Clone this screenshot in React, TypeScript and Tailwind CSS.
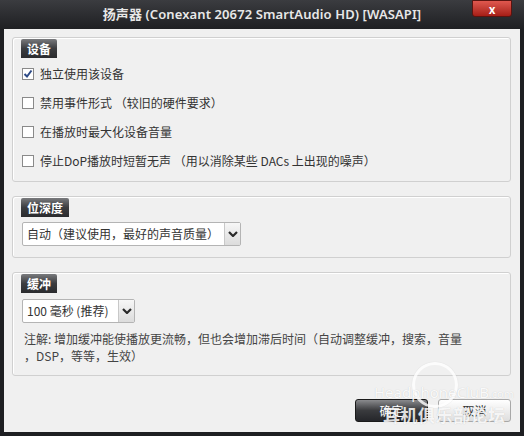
const font = { fontFamily: '"Noto Sans CJK SC", "Noto Sans", sans-serif' };

const devices = [
  { label: "独立使用该设备", checked: true },
  { label: "禁用事件形式 （较旧的硬件要求）", checked: false },
  { label: "在播放时最大化设备音量", checked: false },
  { label: "停止DoP播放时短暂无声 （用以消除某些 DACs 上出现的噪声）", checked: false },
];

const Tab = ({ text }: { text: string }) => (
  <div className="ml-[8px] mt-[1px] self-start h-[19px] px-[6px] flex items-center rounded-t-[2px] bg-gradient-to-b from-[#7a7b7e] via-[#3c3d40] to-[#2a2b2e] text-white text-[12px] font-bold leading-none">
    {text}
  </div>
);

const Chevron = () => (
  <svg width="10" height="6" viewBox="0 0 10 6">
    <path d="M1 1 L5 5 L9 1" fill="none" stroke="#2a2a2a" strokeWidth="2.2" />
  </svg>
);

const Select = ({ text, width }: { text: string; width: string }) => (
  <div className={`${width} ml-[9px] h-[24px] flex border border-[#b4b4b4] bg-white rounded-[2px]`}>
    <div className="flex-1 flex items-center pl-[4px] text-[12px] text-[#333]">{text}</div>
    <div className="w-[16px] flex items-center justify-center border-l border-[#c8c8c8] bg-gradient-to-b from-[#f7f7f7] to-[#dcdcdc]">
      <Chevron />
    </div>
  </div>
);

const Checkbox = ({ checked }: { checked: boolean }) => (
  <div className="w-[12px] h-[12px] border border-[#8a8a8a] bg-white flex items-center justify-center">
    {checked && (
      <svg width="10" height="10" viewBox="0 0 10 10">
        <path d="M1.5 5 L4 7.5 L8.5 1.5" fill="none" stroke="#2d4a86" strokeWidth="2" />
      </svg>
    )}
  </div>
);

export default function App() {
  return (
    <div className="w-[524px] h-[436px] bg-[#1e1f22] flex flex-col overflow-hidden" style={font}>
      <div className="relative h-[29px] bg-gradient-to-b from-[#3b3c40] to-[#1f2023] flex items-center justify-center">
        <span className="text-[13px] font-semibold text-[#e8e8e8] tracking-[0.1px]" style={{ fontFamily: '"Noto Sans", "Noto Sans CJK SC", sans-serif' }}>
          扬声器 (Conexant 20672 SmartAudio HD) [WASAPI]
        </span>
        <div className="absolute right-[12px] top-0 w-[40px] h-[17px] rounded-b-[3px] border border-[#5a1410] bg-gradient-to-b from-[#e0584f] to-[#a61d16] flex items-center justify-center text-white text-[12px] font-bold">
          x
        </div>
      </div>

      <div className="mx-[4px] h-[403px] bg-[#f0f0f0] flex flex-col px-[8px] pt-[8px] gap-[14px] relative overflow-hidden">
        <div className="h-[145px] border border-[#d0d0d0] rounded-[3px] shadow-[inset_1px_1px_0_#ffffff] flex flex-col mr-[1px]">
          <Tab text="设备" />
          <div className="pt-[1px] flex flex-col">
            {devices.map((d) => (
              <div key={d.label} className="h-[29px] flex items-center pl-[9px] gap-[6px] text-[12px] text-[#333]">
                <Checkbox checked={d.checked} />
                <span>{d.label}</span>
              </div>
            ))}
          </div>
        </div>

        <div className="h-[62px] border border-[#d0d0d0] rounded-[3px] shadow-[inset_1px_1px_0_#ffffff] flex flex-col mr-[1px]">
          <Tab text="位深度" />
          <div className="mt-[5px]">
            <Select text="自动（建议使用，最好的声音质量）" width="w-[219px]" />
          </div>
        </div>

        <div className="h-[104px] border border-[#d0d0d0] rounded-[3px] shadow-[inset_1px_1px_0_#ffffff] flex flex-col mr-[1px]">
          <Tab text="缓冲" />
          <div className="mt-[6px]">
            <Select text="100 毫秒 (推荐)" width="w-[113px]" />
          </div>
          <p className="mt-[7px] pl-[11px] text-[12px] leading-[17px] text-[#444]">
            注解: 增加缓冲能使播放更流畅，但也会增加滞后时间（自动调整缓冲，搜索，音量
            <br />
            ，DSP，等等，生效）
          </p>
        </div>

        <div className="flex justify-end gap-[10px] mt-[9px] pr-[1px]">
          <div className="w-[73px] h-[23px] rounded-[3px] border border-[#1a1a1a] bg-gradient-to-b from-[#8a8b8e] via-[#3a3b3e] to-[#25262a] text-white text-[12px] flex items-center justify-center">
            确定
          </div>
          <div className="w-[73px] h-[23px] rounded-[3px] border border-[#a8a8a8] bg-gradient-to-b from-[#ffffff] to-[#dedede] text-[#333] text-[12px] flex items-center justify-center">
            取消
          </div>
        </div>

        <div className="absolute left-[408px] top-[333px] w-[46px] h-[46px] rounded-full border-[3px] border-white/80 [box-shadow:0_0_1px_rgba(0,0,0,0.15)] pointer-events-none" />
        <div className="absolute left-[370px] top-[353px] text-[15px] leading-[20px] text-white/90 [text-shadow:0_0_1px_rgba(0,0,0,0.2)] pointer-events-none" style={{ fontFamily: '"Noto Sans", sans-serif' }}>
          HeadphoneCluB<span className="text-[11px]">.com</span>
        </div>
        <div className="absolute left-[379px] top-[375px] text-[17px] leading-[22px] font-bold text-white/85 tracking-[0.5px] [text-shadow:0_0_1px_rgba(0,0,0,0.2)] pointer-events-none">
          耳机俱乐部论坛
        </div>
      </div>
    </div>
  );
}
